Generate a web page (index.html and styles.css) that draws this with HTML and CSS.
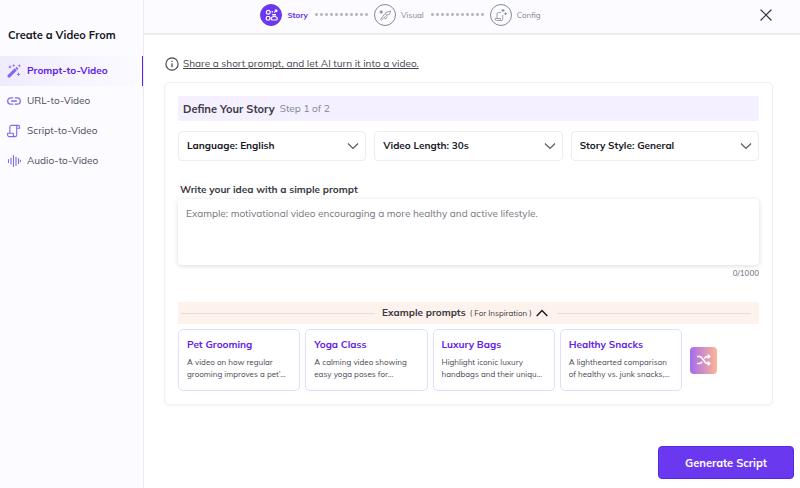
FILE: index.html
```html
<!DOCTYPE html>
<html lang="en">
<head>
<meta charset="utf-8">
<meta name="viewport" content="width=device-width, initial-scale=1">
<title>Create a Video</title>
<link rel="stylesheet" href="styles.css">
</head>
<body>
<div class="app">
  <aside class="sidebar">
    <h1 class="sidebar-title">Create a Video From</h1>
    <nav class="nav">
      <a class="nav-item active" href="#">
        <svg class="nav-icon" viewBox="0 0 14 14" fill="currentColor"><path d="M1.100 11.100 7.700 4.500l2 2L3.100 13.100a1.400 1.400 0 0 1-2-2z" stroke="currentColor" stroke-width=".4"/><path d="M8.300 4 9.500 2.800l2 2L10.300 6z"/><path d="m3 1 .6 1.400L5 3l-1.400.6L3 5l-.6-1.400L1 3l1.400-.6zM6.700 0l.5 1.100 1.100.5-1.100.5-.5 1.100-.5-1.100-1.100-.5 1.100-.5zM12.300 0l.5 1.200 1.200.5-1.200.5-.5 1.200-.5-1.200-1.200-.5 1.200-.5zM11.500 8.300l.6 1.400 1.400.6-1.400.6-.6 1.400-.6-1.400-1.400-.6 1.400-.6z"/></svg>
        Prompt-to-Video</a>
      <a class="nav-item" href="#">
        <svg class="nav-icon" viewBox="0 0 14 14" fill="none" stroke="currentColor" stroke-width="1.300" stroke-linecap="round"><path d="M5.700 3.800H3.900a3.200 3.200 0 0 0 0 6.400h1.800M8.300 3.800h1.800a3.200 3.200 0 0 1 0 6.400H8.300M4.600 7h4.800"/></svg>
        URL-to-Video</a>
      <a class="nav-item" href="#">
        <svg class="nav-icon" viewBox="0 0 14 14" fill="none" stroke="currentColor" stroke-width="1.100" stroke-linejoin="round"><path d="M2.900 9.300V3.100a1.700 1.700 0 0 1 1.700-1.700h6.400M11 1.400a1.300 1.300 0 0 0-1.300 1.300v8.200a1.700 1.700 0 0 1-3.400 0V9.300H.6v1.500a1.800 1.800 0 0 0 1.800 1.800H8M11 1.400c.9 0 1.500.7 1.500 1.500v1.300H9.700"/></svg>
        Script-to-Video</a>
      <a class="nav-item" href="#">
        <svg class="nav-icon" viewBox="0 0 14 14" fill="none" stroke="currentColor" stroke-width="1.100" stroke-linecap="round"><path d="M1.500 5.500v3M4 4v6M6.500 1.500v11M9 3v8.500M11.500 4.500v5M13.400 6.300v1.400"/></svg>
        Audio-to-Video</a>
    </nav>
  </aside>

  <div class="workspace">
    <header class="topbar">
      <ol class="stepper">
        <li class="step current">
          <span class="step-badge"><svg viewBox="0 0 14 14" fill="none" stroke="currentColor" stroke-width="1.200"><circle cx="4.300" cy="4.300" r="1.900"/><rect x="2.300" y="8.500" width="3.600" height="3.500" rx="1"/><path d="M8.800 12a1.500 1.500 0 0 1-.2-3 2 2 0 0 1 3.300 0 1.500 1.500 0 0 1-.2 3zM8 6.600h4M8.300 4.500V3M10.300 4.600l2-2.200M10.800 2h1.900v2"/></svg></span>
          Story</li>
        <li class="dots"></li>
        <li class="step">
          <span class="step-badge"><svg viewBox="0 0 14 14" fill="none" stroke="currentColor" stroke-width=".8"><path d="m2.500 11.500 4.500-6L8.800 7.200l-5.500 5zM7 5.500l2-1.500 3.500-1-.8 3.200-2.900 1M6.200 10l1.800.8 1.300-2.300"/><path d="M3.200 2.300v3.400M1.500 4h3.400M2 2.800l2.400 2.400M4.400 2.800 2 5.200" stroke-width=".9"/></svg></span>
          Visual</li>
        <li class="dots"></li>
        <li class="step">
          <span class="step-badge"><svg viewBox="0 0 14 14" fill="none" stroke="currentColor" stroke-width=".8"><path d="M7 4.500H4.500A1.500 1.500 0 0 0 3 6v4.500H1.200v.8c0 .8.6 1.200 1.300 1.200h5M8.700 7v4c0 1-.6 1.500-1.200 1.500S6.300 12 6.300 11v-.5H3"/><path d="M9 1v3M7.500 2.500h3M11.500 4.500v2.400M10.300 5.700h2.600" stroke-width="1.100"/></svg></span>
          Config</li>
      </ol>
      <button class="close" type="button" aria-label="Close"><svg viewBox="0 0 12 12" fill="none" stroke="currentColor" stroke-width="1.200" stroke-linecap="round"><path d="m1 1 10 10M11 1 1 11"/></svg></button>
    </header>

    <main class="content">
      <p class="hint">
        <svg class="hint-icon" viewBox="0 0 14 14" fill="none" stroke="currentColor"><circle cx="7" cy="7" r="6.100" stroke-width="1.100"/><path d="M7 6.200v4M7 3.700v1.200" stroke-width="1.200"/></svg>
        <a href="#">Share a short prompt, and let AI turn it into a video.</a>
      </p>

      <form class="card" id="story">
        <div class="card-head"><h2>Define Your Story</h2><span>Step 1 of 2</span></div>

        <div class="selects">
          <div class="select-box">
            <select aria-label="Language"><option>Language: English</option></select>
            <svg viewBox="0 0 12 8" fill="none" stroke="currentColor" stroke-width="1.100"><path d="m1 1.500 5 5 5-5"/></svg>
          </div>
          <div class="select-box">
            <select aria-label="Video length"><option>Video Length: 30s</option></select>
            <svg viewBox="0 0 12 8" fill="none" stroke="currentColor" stroke-width="1.100"><path d="m1 1.500 5 5 5-5"/></svg>
          </div>
          <div class="select-box">
            <select aria-label="Story style"><option>Story Style: General</option></select>
            <svg viewBox="0 0 12 8" fill="none" stroke="currentColor" stroke-width="1.100"><path d="m1 1.500 5 5 5-5"/></svg>
          </div>
        </div>

        <label class="idea-label" for="idea">Write your idea with a simple prompt</label>
        <textarea id="idea" class="idea" maxlength="1000" placeholder="Example: motivational video encouraging a more healthy and active lifestyle."></textarea>
        <p class="counter">0/1000</p>

        <button class="examples-toggle" type="button" aria-expanded="true">
          <b>Example prompts</b> <small>( For Inspiration )</small>
          <svg viewBox="0 0 12 8" fill="none" stroke="currentColor" stroke-width="1.400"><path d="m.7 7 5.300-5.500L11.300 7"/></svg>
        </button>

        <div class="examples">
          <button class="example" type="button"><b>Pet Grooming</b><span>A video on how regular<br>grooming improves a pet’...</span></button>
          <button class="example" type="button"><b>Yoga Class</b><span>A calming video showing<br>easy yoga poses for...</span></button>
          <button class="example" type="button"><b>Luxury Bags</b><span>Highlight iconic luxury<br>handbags and their uniqu...</span></button>
          <button class="example" type="button"><b>Healthy Snacks</b><span>A lighthearted comparison<br>of healthy vs. junk snacks,...</span></button>
          <button class="shuffle" type="button" aria-label="Shuffle examples"><svg viewBox="0 0 14 12" fill="none" stroke="currentColor" stroke-width="1.500" stroke-linejoin="round"><path d="M0 2.500h2.500c3.500 0 4.500 7 8 7H12M0 9.500h2.500c1.200 0 2-.8 2.700-1.900M7.300 4.500c.8-1.200 1.700-2 3.200-2H12"/><path d="M11 .5v4l2.500-2zM11 7.500v4l2.500-2z" fill="currentColor" stroke-width=".8"/></svg></button>
        </div>
      </form>
    </main>

    <footer class="actions">
      <button class="primary" type="submit" form="story">Generate Script</button>
    </footer>
  </div>
</div>
</body>
</html>
```
FILE: styles.css
```css
* { box-sizing: border-box; }

body {
  margin: 0;
  background: #fff;
  color: #3a3a44;
  font-family: Mulish, Lato, "Open Sans", sans-serif;
  font-size: 10px;
  line-height: 14px;
}

button, select, textarea { font: inherit; color: inherit; }
button { cursor: pointer; border: 0; padding: 0; background: none; }
a { color: inherit; }
svg { display: block; flex: none; }

.app { display: flex; min-height: 100vh; }

.sidebar {
  flex: none;
  width: 144px;
  background: #fcfbff;
  border-right: 1px solid #ebebef;
}
.sidebar-title {
  margin: 28px 8px 14px;
  color: #17171f;
  font-size: 11px;
  line-height: 14px;
  white-space: nowrap;
}
.nav-item {
  display: flex;
  align-items: center;
  gap: 6px;
  height: 30px;
  padding-left: 7px;
  color: #4a4a55;
  text-decoration: none;
}
.nav-item.active {
  color: #5f22e6;
  font-weight: 700;
  background: linear-gradient(90deg, #f0ebfd, #fcfbff);
  border-right: 1px solid #5f22e6;
}
.nav-icon { width: 14px; height: 14px; color: #8468ea; }

.workspace { flex: 1; min-width: 0; display: flex; flex-direction: column; }

.topbar {
  display: flex;
  align-items: center;
  height: 35px;
  padding: 0 28px 4px 0;
  background: #fcfbff;
  border-bottom: 2px solid #ebebee;
}
.stepper {
  flex: 1;
  display: flex;
  align-items: center;
  justify-content: center;
  margin: 0 103px 0 0;
  padding: 0;
  list-style: none;
  color: #85858f;
  font-size: 8px;
}
.step { display: flex; align-items: center; gap: 5px; }
.step.current { color: #5f2eea; font-weight: 700; }
.step-badge {
  display: grid;
  place-items: center;
  width: 22px;
  height: 22px;
  border: 1px solid #858b99;
  border-radius: 50%;
  color: #858b99;
}
.step-badge svg { width: 14px; height: 14px; }
.current .step-badge { background: #6938ef; border-color: #6938ef; color: #fff; }
.dots {
  width: 55px;
  height: 3px;
  margin: 0 5px 0 6px;
  background: radial-gradient(circle, #b8b8b8 1px, transparent 2px) 0 0 / 5px 3px;
}
.close { color: #333; }
.close svg { width: 12px; height: 12px; }

.content { padding: 22px 27px 0 20px; }

.hint { display: flex; align-items: center; gap: 4px; margin: 0 0 11px; padding-left: 1px; color: #43434b; }
.hint-icon { width: 14px; height: 14px; }

.card {
  padding: 13px;
  border: 1px solid #f1f1f4;
  border-radius: 5px;
  box-shadow: 0 1px 3px #0000000d;
}
.card-head {
  display: flex;
  align-items: center;
  gap: 5px;
  height: 25px;
  padding: 0 5px;
  border-radius: 2px;
  background: #f4f0ff;
}
.card-head h2 { margin: 0; font-size: 11px; }
.card-head span { color: #85858f; }

.selects { display: grid; grid-template-columns: repeat(3, 1fr); gap: 8px; margin-top: 10px; }
.select-box { position: relative; }
.select-box select {
  appearance: none;
  display: block;
  width: 100%;
  height: 30px;
  padding: 0 24px 0 8px;
  border: 1px solid #ececf1;
  border-radius: 4px;
  background: #fff;
  color: #17171f;
  font-weight: 700;
}
.select-box svg {
  position: absolute;
  top: 11px;
  right: 7px;
  width: 12px;
  height: 8px;
  color: #55555c;
  pointer-events: none;
}

.idea-label { display: block; margin: 22px 2px 2px; font-weight: 700; }
.idea {
  display: block;
  width: 100%;
  height: 66px;
  padding: 8px;
  border: 0;
  border-radius: 4px;
  background: #fff;
  box-shadow: 0 1px 5px #00000026;
  resize: none;
}
.idea::placeholder { color: #75757d; opacity: 1; }
.counter { margin: 2px 0 0; color: #66666e; font-size: 8px; line-height: 12px; text-align: right; }

.examples-toggle {
  display: flex;
  align-items: center;
  justify-content: center;
  gap: 4px;
  width: 100%;
  height: 22px;
  margin-top: 23px;
  padding: 0 8px 0 3px;
  background: #fdf3ec;
}
.examples-toggle::before, .examples-toggle::after {
  content: "";
  flex: 1;
  height: 1px;
  margin-right: 3px;
  background: #e6dcd8;
}
.examples-toggle::after { margin: 0 0 0 5px; }
.examples-toggle small { font-size: 8px; }
.examples-toggle svg { width: 12px; height: 8px; color: #17171f; }

.examples {
  display: grid;
  grid-template-columns: repeat(4, 1fr) 30px;
  align-items: center;
  gap: 5px;
  margin-top: 5px;
  padding-right: 42px;
}
.example {
  min-width: 0;
  height: 62px;
  padding: 0 8px 3px;
  border: 1px solid #e3dcfd;
  border-radius: 5px;
  background: #fff;
  text-align: left;
  white-space: nowrap;
}
.example b { display: block; margin-bottom: 4px; color: #5f22e6; }
.example span { display: block; color: #4a4a55; font-size: 8px; line-height: 12px; }
.shuffle {
  display: grid;
  place-items: center;
  width: 27px;
  height: 27px;
  margin-left: 3px;
  border-radius: 4px;
  background: linear-gradient(90deg, #a46cee, #ffb595);
  color: #fff;
}
.shuffle svg { width: 14px; height: 12px; }

.actions { display: flex; justify-content: flex-end; margin-top: auto; padding: 9px 6px; }
.primary {
  width: 136px;
  height: 33px;
  border: 1px solid #5724e8;
  border-radius: 4px;
  background: #6938ef;
  color: #fff;
  font-size: 11px;
  font-weight: 700;
}
```
